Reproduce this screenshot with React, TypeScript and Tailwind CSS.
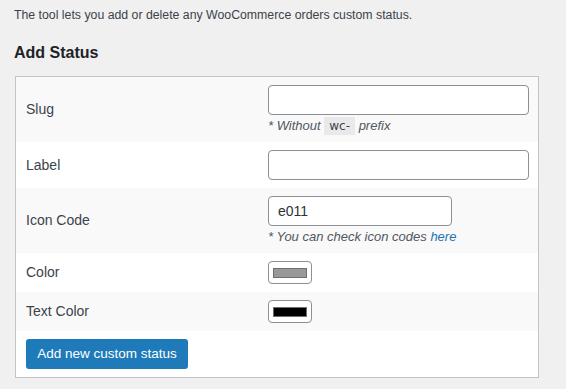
import React from "react";

const font = { fontFamily: '"Liberation Sans", Arial, sans-serif' };

function Row({
  label,
  bg,
  children,
}: {
  label: string;
  bg: string;
  children: React.ReactNode;
}) {
  return (
    <div className={`flex items-center py-2 pl-[10px] pr-[9px] ${bg}`}>
      <div className="w-[242px] shrink-0 text-[14px] text-[#3c434a]">{label}</div>
      <div className="flex-1">{children}</div>
    </div>
  );
}

function Swatch({ color }: { color: string }) {
  return (
    <button className="flex h-[23px] w-[44px] items-center justify-center rounded-[4px] border border-[#8c8f94] bg-white">
      <span className={`block h-[10px] w-[34px] border border-[#6f6f6f] ${color}`} />
    </button>
  );
}

export default function App() {
  return (
    <div className="min-h-[389px] bg-[#f0f0f1] pl-[14px] pr-[27px]" style={font}>
      <p className="pt-[6px] text-[12.3px] leading-[18px] text-[#3c434a]">
        The tool lets you add or delete any WooCommerce orders custom status.
      </p>
      <h2 className="mt-[19px] text-[16px] font-bold leading-[20px] text-[#1d2327]">Add Status</h2>
      <div className="ml-px mt-[13px] border border-[#c3c4c7] bg-white">
        <Row label="Slug" bg="bg-[#f9f9f9]">
          <input className="block h-[30px] w-full rounded-[4px] border border-[#8c8f94] bg-white px-[9px] text-[14px] outline-none" />
          <p className="mt-[2px] h-[17px] overflow-visible text-[13px] italic leading-[17px] text-[#50575e]">
            * Without{" "}
            <code
              className="bg-[#e9e9ea] px-[5px] py-[2px] text-[12px] leading-[12px] not-italic text-[#3c434a]"
              style={{ fontFamily: '"DejaVu Sans", "Liberation Sans", sans-serif' }}
            >
              wc-
            </code>{" "}
            prefix
          </p>
        </Row>
        <Row label="Label" bg="bg-white">
          <input className="block h-[30px] w-full rounded-[4px] border border-[#8c8f94] bg-white px-[9px] text-[14px] outline-none" />
        </Row>
        <Row label="Icon Code" bg="bg-[#f9f9f9]">
          <input
            defaultValue="e011"
            className="block h-[30px] w-[184px] rounded-[4px] border border-[#8c8f94] bg-white px-[9px] text-[14px] text-[#2c3338] outline-none"
          />
          <p className="mt-[2px] h-[17px] text-[13px] italic leading-[17px] text-[#50575e]">
            * You can check icon codes <a className="text-[#2271b1]">here</a>
          </p>
        </Row>
        <Row label="Color" bg="bg-white">
          <Swatch color="bg-[#999999]" />
        </Row>
        <Row label="Text Color" bg="bg-[#f9f9f9]">
          <Swatch color="bg-black" />
        </Row>
        <div className="bg-white px-[10px] py-2">
          <button className="h-[30px] w-[162px] rounded-[3px] bg-[#1e7ab9] text-[13.5px] text-white">
            Add new custom status
          </button>
        </div>
      </div>
    </div>
  );
}
